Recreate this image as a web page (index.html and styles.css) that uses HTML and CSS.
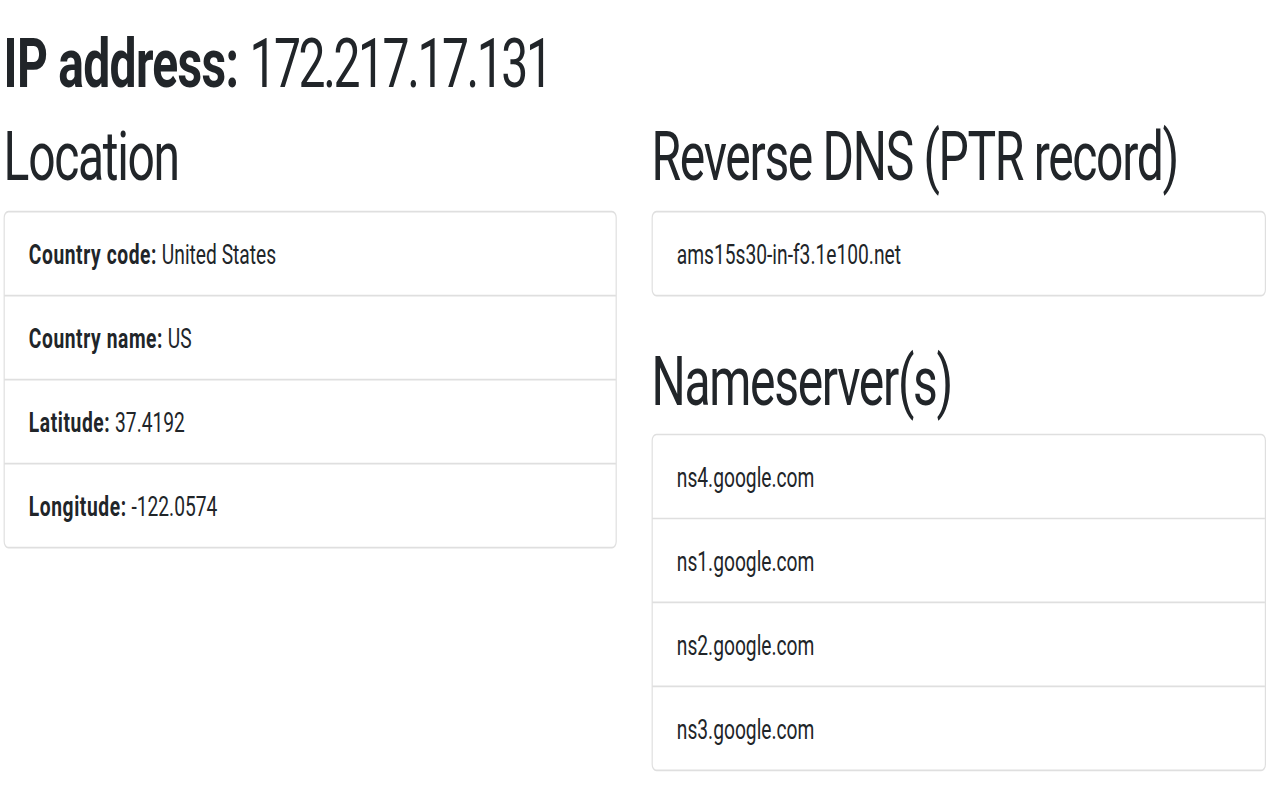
FILE: index.html
```html
<!DOCTYPE html>
<html lang="en">
<head>
  <meta charset="UTF-8" />
  <meta name="viewport" content="width=device-width, initial-scale=1.0"/>
  <title>IP lookup</title>
  <link rel="stylesheet" href="styles.css">
</head>
<body>
  <div class="page">
    <h1 class="title"><strong>IP address:</strong> <span class="ip">172.217.17.131</span></h1>

    <div class="row">
      <div class="col">
        <h1>Location</h1>
        <ul class="list-group">
          <li class="list-item"><strong>Country code:</strong> United States</li>
          <li class="list-item"><strong>Country name:</strong> US</li>
          <li class="list-item"><strong>Latitude:</strong> 37.4192</li>
          <li class="list-item"><strong>Longitude:</strong> -122.0574</li>
        </ul>
      </div>

      <div class="col">
        <h1>Reverse DNS (PTR record)</h1>
        <ul class="list-group spaced">
          <li class="list-item">ams15s30-in-f3.1e100.net</li>
        </ul>

        <h1>Nameserver(s)</h1>
        <ul class="list-group">
          <li class="list-item">ns4.google.com</li>
          <li class="list-item">ns1.google.com</li>
          <li class="list-item">ns2.google.com</li>
          <li class="list-item">ns3.google.com</li>
        </ul>
      </div>
    </div>
  </div>
</body>
</html>
```

FILE: styles.css
```css
body {
  margin: 0;
  min-height: 800px;
  background-color: #fff;
  color: #212529;
  font-family: Roboto, 'Liberation Sans', sans-serif;
  font-size: 16px;
  line-height: 1.5;
}
/* the shot is stretched, so the page is drawn small and scaled up */
.page {
  width: 1067px;
  padding-top: 13.5px;
  transform: scale(1.2, 1.714);
  transform-origin: 0 0;
}
h1 {
  font-size: 40px;
  font-weight: 400;
  line-height: 48px;
  margin: 0 0 6.5px;
  letter-spacing: -1.1px;
}
h1.title {
  padding-left: 3px;
  letter-spacing: -0.6px;
}
h1 strong {
  font-weight: 700;
}
h1 .ip {
  letter-spacing: -2px;
}
.row {
  display: grid;
  grid-template-columns: 511px 512px;
  column-gap: 29px;
  padding-left: 3px;
}
.list-group {
  list-style: none;
  margin: 0;
  padding: 0;
  border: 1px solid rgba(0, 0, 0, 0.125);
  border-radius: 4px;
}
.list-group.spaced {
  margin-bottom: 26px;
}
.list-item {
  padding: 13px 20px 11px;
  height: 24px;
}
.list-item + .list-item {
  border-top: 1px solid rgba(0, 0, 0, 0.125);
}
.list-item strong {
  font-weight: 700;
  letter-spacing: 0.5px;
}
```
